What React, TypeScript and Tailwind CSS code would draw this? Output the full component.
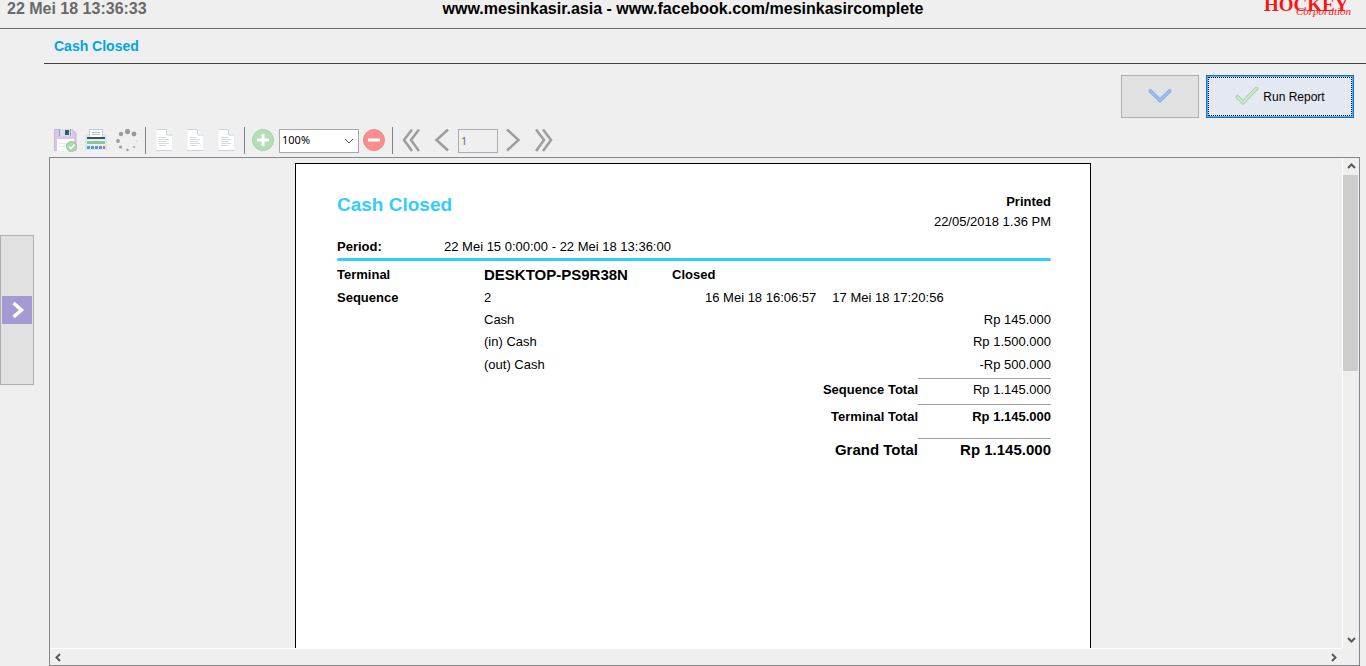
import React, { useState } from "react";

const SaveIcon = () => (
  <svg width="24" height="24" viewBox="0 0 24 24">
    <path d="M0.5 0.5H18L22 4V21.5H0.5Z" fill="#d9c8ea" stroke="#c5b2da" />
    <rect x="5" y="0" width="13" height="7" fill="#d5dfe8" />
    <rect x="11" y="1" width="4" height="5" fill="#3f5872" />
    <path d="M5.5 0V7M16.5 0V7" stroke="#8fa3b8" />
    <rect x="3" y="10" width="17" height="12" fill="#fbfcfe" />
    <path d="M5 14.5H16M5 17.5H12" stroke="#e2ebf3" />
    <circle cx="17.5" cy="17.5" r="5" fill="#a9dbaa" stroke="#93c795" />
    <path d="M15 17.5L17 19.5L20.5 15.5" stroke="#fff" strokeWidth="1.5" fill="none" />
  </svg>
);

const PrinterIcon = () => (
  <svg width="24" height="24" viewBox="0 0 24 24">
    <rect x="0" y="5" width="22" height="16" fill="#dce9f3" />
    <rect x="4.5" y="0.5" width="13" height="9" fill="#fff" stroke="#c3ccd3" />
    <path d="M7 3.5H15M7 5.5H15" stroke="#b4bfc9" />
    <rect x="2" y="8" width="18" height="2" fill="#34506b" />
    <rect x="2" y="11" width="18" height="6" fill="#e9f5e9" />
    <rect x="2" y="12" width="18" height="3" fill="#8cc79a" />
    <path d="M2 18.5H17" stroke="#5b93dc" strokeWidth="3" strokeDasharray="3 1" />
    <path d="M18 18.5H20" stroke="#e8605f" strokeWidth="3" />
  </svg>
);

const dots = [
  { x: 11.5, y: 2.5, r: 2.6 },
  { x: 18, y: 5, r: 2.4 },
  { x: 21, y: 12, r: 0.6 },
  { x: 18, y: 18, r: 1 },
  { x: 11.5, y: 21, r: 1.2 },
  { x: 4.5, y: 18, r: 1.6 },
  { x: 2, y: 12, r: 1.9 },
  { x: 5, y: 5, r: 2.2 },
];

const ReloadIcon = () => (
  <svg width="24" height="24" viewBox="0 0 24 24" fill="#9b9b9b">
    {dots.map((d, i) => (
      <circle key={i} cx={d.x} cy={d.y} r={d.r} />
    ))}
  </svg>
);

const PageIcon = () => (
  <svg width="18" height="24" viewBox="0 0 18 24">
    <path d="M0.5 0H10L16 6V21.5H0.5Z" fill="#fff" />
    <path d="M0 21.5H16M0.5 0.5H10L16 6.5" stroke="#ccd3db" fill="none" />
    <path d="M10.5 0.5V6H16" stroke="#ccd3db" fill="#f3f5f8" />
    <path d="M3 8.5H10M3 10.5H13M3 12.5H11M3 14.5H13M3 16.5H10" stroke="#d5dae2" />
  </svg>
);

const ZoomIcon = ({ minus }: { minus?: boolean }) => (
  <svg width="24" height="24" viewBox="0 0 24 24">
    <circle
      cx="11"
      cy="11"
      r="10.5"
      fill={minus ? "#f98e8c" : "#b4dfb6"}
      stroke={minus ? "#f08583" : "#a3d2a6"}
    />
    <path d={minus ? "M5 11H17" : "M5 11H17M11 5V17"} stroke="#fff" strokeWidth="3" />
  </svg>
);

const NavIcon = ({ d }: { d: string }) => (
  <svg width="24" height="24" viewBox="0 0 24 24" fill="none" stroke="#9d9d9d" strokeWidth="2.5">
    <path d={d} />
  </svg>
);

const ScrollArrow = ({ d }: { d: string }) => (
  <svg width="9" height="9" viewBox="0 0 9 9" fill="none" stroke="#5a5a5a" strokeWidth="2">
    <path d={d} />
  </svg>
);

const ToolButton = ({ label, children }: { label: string; children: React.ReactNode }) => (
  <button
    type="button"
    aria-label={label}
    className="w-[31px] h-6 shrink-0 flex items-center justify-center"
  >
    {children}
  </button>
);

const Separator = () => <div className="w-px h-[27px] bg-[#828282] ml-[2px] mr-[3px]" />;

const Header = () => (
  <header className="h-[29px] shrink-0 border-b border-[#6b6b6b] grid grid-cols-[1fr_auto_1fr] text-base font-bold leading-[18px]">
    <span className="pl-[7px] text-[#696969]">22 Mei 18 13:36:33</span>
    <h1 className="text-black">www.mesinkasir.asia - www.facebook.com/mesinkasircomplete</h1>
    <div className="flex justify-end pr-3 overflow-hidden">
      <div className="relative w-[90px] h-5 font-['Liberation_Serif',serif] text-[#fa1414]">
        <span className="block text-[19px] leading-[10px]">HOCKEY</span>
        <span className="absolute left-8 top-[5px] text-[11px] leading-3 italic font-normal">
          Corporation
        </span>
      </div>
    </div>
  </header>
);

const Toolbar = () => {
  const [zoom, setZoom] = useState("100%");
  return (
    <div className="flex items-center h-[27px] mt-[9px] ml-[6px]">
      <ToolButton label="Save"><SaveIcon /></ToolButton>
      <ToolButton label="Print"><PrinterIcon /></ToolButton>
      <ToolButton label="Reload"><ReloadIcon /></ToolButton>
      <Separator />
      <ToolButton label="Actual size"><PageIcon /></ToolButton>
      <ToolButton label="Fit page"><PageIcon /></ToolButton>
      <ToolButton label="Fit width"><PageIcon /></ToolButton>
      <Separator />
      <ToolButton label="Zoom in"><ZoomIcon /></ToolButton>
      <div className="relative w-20">
        <select
          aria-label="Zoom"
          value={zoom}
          onChange={(e) => setZoom(e.target.value)}
          className="block w-full h-6 appearance-none rounded-none border border-[#a8a9ad] bg-white pl-[2px] text-[11px] text-black font-['Noto_Sans',sans-serif]"
        >
          <option>50%</option>
          <option>75%</option>
          <option>100%</option>
          <option>150%</option>
        </select>
        <svg
          className="absolute right-[5px] top-2 pointer-events-none"
          width="10"
          height="8"
          viewBox="0 0 10 8"
          fill="none"
          stroke="#5a5a5a"
        >
          <path d="M1 2L5 6L9 2" />
        </svg>
      </div>
      <ToolButton label="Zoom out"><ZoomIcon minus /></ToolButton>
      <Separator />
      <ToolButton label="First page"><NavIcon d="M12 0.5L4 11L12 22M19 0.5L11 11L19 22" /></ToolButton>
      <ToolButton label="Previous page"><NavIcon d="M17 0.5L5.5 11L17 21.5" /></ToolButton>
      <input
        aria-label="Page"
        defaultValue="1"
        className="w-10 h-6 border border-[#abadb3] bg-[#efefef] pl-[2px] text-[11px] text-[#6d6d6d] font-['Noto_Sans',sans-serif]"
      />
      <ToolButton label="Next page"><NavIcon d="M5 0.5L16.5 11L5 21.5" /></ToolButton>
      <ToolButton label="Last page"><NavIcon d="M3 0.5L11 11L3 22M10 0.5L18 11L10 22" /></ToolButton>
    </div>
  );
};

const payments = [
  { name: "Cash", amount: "Rp 145.000", height: "h-[22px]" },
  { name: "(in) Cash", amount: "Rp 1.500.000", height: "h-[23px]" },
  { name: "(out) Cash", amount: "-Rp 500.000", height: "h-6" },
];

const Report = () => (
  <article className="w-[796px] min-h-[1124px] shrink-0 bg-white border border-black pl-[41px] pr-[39px] pt-[27px] text-[13px] leading-[22px] text-black">
    <div className="flex justify-between h-[45px]">
      <h2 className="text-[19px] leading-7 font-bold text-[#33ccff]">Cash Closed</h2>
      <div className="text-right leading-5 pt-px">
        <p className="font-bold">Printed</p>
        <p>22/05/2018 1.36 PM</p>
      </div>
    </div>
    <div className="flex h-[22px]">
      <span className="w-[107px] font-bold">Period:</span>
      <span>22 Mei 15 0:00:00 - 22 Mei 18 13:36:00</span>
    </div>
    <div className="h-[3px] rounded-full bg-[#33ccff]" />
    <table className="w-full mt-[2px] table-fixed border-collapse [&_td]:align-top [&_th]:align-top [&_th]:font-bold">
      <colgroup>
        <col className="w-[147px]" />
        <col className="w-[188px]" />
        <col />
        <col className="w-[133px]" />
      </colgroup>
      <tbody>
        <tr className="h-6 leading-6">
          <th className="text-left">Terminal</th>
          <td className="text-[15px] font-bold">DESKTOP-PS9R38N</td>
          <th className="text-left">Closed</th>
          <td />
        </tr>
        <tr className="h-[22px]">
          <th className="text-left">Sequence</th>
          <td>2</td>
          <td colSpan={2} className="pl-[33px]">
            <div className="flex gap-4">
              <span>16 Mei 18 16:06:57</span>
              <span>17 Mei 18 17:20:56</span>
            </div>
          </td>
        </tr>
        {payments.map((p) => (
          <tr key={p.name} className={p.height}>
            <td />
            <td>{p.name}</td>
            <td />
            <td className="text-right">{p.amount}</td>
          </tr>
        ))}
        <tr className="h-[26px]">
          <th colSpan={3} className="text-right border-t border-transparent">Sequence Total</th>
          <td className="text-right border-t border-[#a0a0a0]">Rp 1.145.000</td>
        </tr>
        <tr className="h-[34px] leading-6">
          <th colSpan={3} className="text-right border-t border-transparent">Terminal Total</th>
          <td className="text-right font-bold border-t border-[#a0a0a0]">Rp 1.145.000</td>
        </tr>
        <tr className="text-[15px]">
          <th colSpan={3} className="text-right border-t border-transparent">Grand Total</th>
          <td className="text-right font-bold border-t border-[#a0a0a0]">Rp 1.145.000</td>
        </tr>
      </tbody>
    </table>
  </article>
);

const Viewer = () => (
  <div className="flex-1 min-h-0 mt-[3px] ml-[5px] mr-[6px] border border-[#828790] grid grid-cols-[minmax(0,1fr)_17px] grid-rows-[minmax(0,1fr)_17px]">
    <div className="overflow-hidden flex justify-center pt-[5px] pr-[6px]">
      <Report />
    </div>
    <div className="border-l border-white flex flex-col items-center justify-between">
      <div className="w-full flex flex-col items-center">
        <div className="h-[17px] flex items-center">
          <ScrollArrow d="M1 6L4.5 2.5L8 6" />
        </div>
        <div className="w-[15px] h-[196px] mr-px bg-[#cdcdcd]" />
      </div>
      <div className="h-[17px] flex items-center">
        <ScrollArrow d="M1 3L4.5 6.5L8 3" />
      </div>
    </div>
    <div className="border-t border-white flex items-center justify-between px-1">
      <ScrollArrow d="M6 1L2.5 4.5L6 8" />
      <ScrollArrow d="M3 1L6.5 4.5L3 8" />
    </div>
    <div />
  </div>
);

const App = () => {
  return (
    <div className="h-screen overflow-hidden flex flex-col bg-[#efefef] font-['Liberation_Sans',Arial,sans-serif]">
      <Header />
      <div className="flex flex-1 min-h-0">
        <aside className="w-11 shrink-0">
          <button
            type="button"
            aria-label="Show menu"
            className="mt-[206px] w-[34px] h-[150px] border border-[#adadad] bg-[#e1e1e1] flex items-center justify-center"
          >
            <svg width="30" height="28" viewBox="0 0 30 28">
              <rect width="30" height="28" fill="#a59bd2" />
              <path d="M11.5 7L19.5 14L11.5 21" fill="none" stroke="#fff" strokeWidth="3.5" />
            </svg>
          </button>
        </aside>
        <main className="flex-1 min-w-0 flex flex-col">
          <div className="h-[35px] shrink-0 border-b border-[#404040] pl-[10px] text-sm leading-[34px] font-bold text-[#00a6e0]">
            Cash Closed
          </div>
          <div className="flex justify-end gap-[7px] pt-[11px] pr-3">
            <button
              type="button"
              aria-label="Show filter"
              className="w-[78px] h-[43px] border border-[#adadad] bg-[#e1e1e1] flex items-center justify-center"
            >
              <svg width="24" height="16" viewBox="0 0 24 16" fill="none" strokeLinecap="round">
                <path d="M2.5 2L12 11.5L21.5 2" stroke="#7ea6dc" strokeWidth="3.6" />
                <path d="M2.5 2L12 11.5L21.5 2" stroke="#94c2f5" strokeWidth="2" />
              </svg>
            </button>
            <button
              type="button"
              className="w-[148px] h-[43px] border border-[#0078d7] bg-[#5cacee] p-px text-xs text-black"
            >
              <span className="w-full h-full border border-dotted border-black bg-[#e4e8f1] bg-clip-border flex items-center justify-center gap-1">
                <svg width="24" height="20" viewBox="0 0 24 20" fill="none" strokeLinecap="round">
                  <path d="M2.5 10L8 15.5L21.5 1.5" stroke="#96c69a" strokeWidth="3.6" />
                  <path d="M2.5 10L8 15.5L21.5 1.5" stroke="#ccefcb" strokeWidth="2" />
                </svg>
                Run Report
              </span>
            </button>
          </div>
          <Toolbar />
          <Viewer />
        </main>
      </div>
    </div>
  );
};

export default App;
